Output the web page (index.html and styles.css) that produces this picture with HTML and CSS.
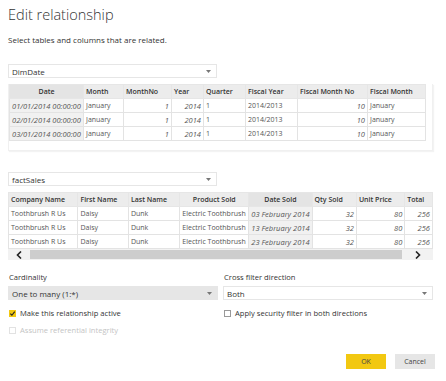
FILE: index.html
```html
<!DOCTYPE html>
<html lang="en">
<head>
  <meta charset="UTF-8" />
  <title>Edit relationship</title>
  <link rel="stylesheet" href="styles.css">
</head>
<body>
  <div class="dialog">
    <h1 class="title">Edit relationship</h1>
    <p class="subtitle">Select tables and columns that are related.</p>

    <div class="dropdown table-pick">
      <span>DimDate</span>
      <svg class="chev" width="5" height="3" viewBox="0 0 5 3"><path d="M0 0h5L2.5 3z" fill="#777"/></svg>
    </div>

    <div class="panel">
      <table class="grid">
        <colgroup>
          <col style="width:74px"><col style="width:40px"><col style="width:48px"><col style="width:32px">
          <col style="width:42px"><col style="width:52px"><col style="width:70px"><col style="width:58px">
        </colgroup>
        <thead>
          <tr>
            <th class="sel center">Date</th><th>Month</th><th>MonthNo</th><th>Year</th>
            <th>Quarter</th><th>Fiscal Year</th><th>Fiscal Month No</th><th>Fiscal Month</th>
          </tr>
        </thead>
        <tbody>
          <tr>
            <td class="sel num-l">01/01/2014 00:00:00</td><td>January</td><td class="num">1</td><td class="num">2014</td>
            <td>1</td><td>2014/2013</td><td class="num">10</td><td>January</td>
          </tr>
          <tr>
            <td class="sel num-l">02/01/2014 00:00:00</td><td>January</td><td class="num">1</td><td class="num">2014</td>
            <td>1</td><td>2014/2013</td><td class="num">10</td><td>January</td>
          </tr>
          <tr>
            <td class="sel num-l">03/01/2014 00:00:00</td><td>January</td><td class="num">1</td><td class="num">2014</td>
            <td>1</td><td>2014/2013</td><td class="num">10</td><td>January</td>
          </tr>
        </tbody>
      </table>
    </div>

    <div class="dropdown table-pick second">
      <span>factSales</span>
      <svg class="chev" width="5" height="3" viewBox="0 0 5 3"><path d="M0 0h5L2.5 3z" fill="#777"/></svg>
    </div>

    <div class="panel wide">
      <table class="grid">
        <colgroup>
          <col style="width:70px"><col style="width:51px"><col style="width:52px"><col style="width:69px">
          <col style="width:61px"><col style="width:45px"><col style="width:49px"><col style="width:28px">
        </colgroup>
        <thead>
          <tr>
            <th>Company Name</th><th>First Name</th><th>Last Name</th><th class="center">Product Sold</th>
            <th class="sel center">Date Sold</th><th>Qty Sold</th><th>Unit Price</th><th>Total</th>
          </tr>
        </thead>
        <tbody>
          <tr>
            <td>Toothbrush R Us</td><td>Daisy</td><td>Dunk</td><td>Electric Toothbrush</td>
            <td class="sel num-l">03 February 2014</td><td class="num">32</td><td class="num">80</td><td class="num">256</td>
          </tr>
          <tr>
            <td>Toothbrush R Us</td><td>Daisy</td><td>Dunk</td><td>Electric Toothbrush</td>
            <td class="sel num-l">13 February 2014</td><td class="num">32</td><td class="num">80</td><td class="num">256</td>
          </tr>
          <tr>
            <td>Toothbrush R Us</td><td>Daisy</td><td>Dunk</td><td>Electric Toothbrush</td>
            <td class="sel num-l">23 February 2014</td><td class="num">32</td><td class="num">80</td><td class="num">256</td>
          </tr>
        </tbody>
      </table>
      <div class="scrollbar">
        <div class="arrow">
          <svg width="6" height="8" viewBox="0 0 6 8"><path d="M5 0.5L1.5 4 5 7.5" fill="none" stroke="#222" stroke-width="1.6"/></svg>
        </div>
        <div class="thumb"></div>
        <div class="arrow right">
          <svg width="6" height="8" viewBox="0 0 6 8"><path d="M1 0.5L4.5 4 1 7.5" fill="none" stroke="#222" stroke-width="1.6"/></svg>
        </div>
      </div>
    </div>

    <div class="options">
      <div class="field">
        <label class="field-label">Cardinality</label>
        <div class="dropdown focused">
          <span>One to many (1:*)</span>
          <svg class="chev" width="5" height="3" viewBox="0 0 5 3"><path d="M0 0h5L2.5 3z" fill="#777"/></svg>
        </div>
        <div class="check first">
          <span class="box on">
            <svg width="8" height="8" viewBox="0 0 8 8"><path d="M1.5 4.2L3.3 6 6.6 1.8" fill="none" stroke="#222" stroke-width="1.3"/></svg>
          </span>
          Make this relationship active
        </div>
        <div class="check disabled">
          <span class="box"></span>
          Assume referential integrity
        </div>
      </div>
      <div class="field">
        <label class="field-label">Cross filter direction</label>
        <div class="dropdown">
          <span>Both</span>
          <svg class="chev" width="5" height="3" viewBox="0 0 5 3"><path d="M0 0h5L2.5 3z" fill="#777"/></svg>
        </div>
        <div class="check first">
          <span class="box"></span>
          Apply security filter in both directions
        </div>
      </div>
    </div>

    <div class="buttons">
      <button class="btn primary">OK</button>
      <button class="btn">Cancel</button>
    </div>
  </div>
</body>
</html>
```

FILE: styles.css
```css
:root {
  --text: #3a3a3a;
  --muted: #555;
  --line: #e3e3e3;
  --head: #ececec;
  --sel: #f1f1f1;
  --yellow: #f2c811;
}

body {
  margin: 0;
  background: #fff;
  font-family: "Open Sans", "Noto Sans", sans-serif;
  color: var(--text);
}

.dialog {
  padding: 0 8px;
}

.title {
  margin: 0;
  padding-top: 2px;
  height: 29px;
  font-size: 14.5px;
  font-weight: 300;
  line-height: 26px;
  color: #333;
}

.subtitle {
  margin: 0;
  height: 33px;
  font-size: 8px;
  line-height: 18px;
  color: #333;
}

.dropdown {
  display: flex;
  align-items: center;
  justify-content: space-between;
  box-sizing: border-box;
  height: 14px;
  padding: 0 5px 0 3px;
  border: 1px solid #e6e6e6;
  font-size: 8px;
  color: #333;
}

.table-pick {
  width: 209px;
}

.table-pick.second {
  margin-top: 21px;
}

.dropdown.focused {
  background: #e6e6e6;
}

.panel {
  margin-top: 6px;
  width: 425px;
  height: 67px;
  box-sizing: border-box;
  border: 1px solid #f0f0f0;
  border-top: none;
  box-shadow: 1px 1px 1px #f3f3f3;
}

.panel.wide {
  height: auto;
  border: none;
  box-shadow: none;
}

.grid {
  border-collapse: collapse;
  table-layout: fixed;
  font-size: 7px;
}

.grid th,
.grid td {
  height: 13px;
  padding: 0 2px;
  border: 1px solid var(--line);
  white-space: nowrap;
  overflow: hidden;
  text-align: left;
}

.grid th {
  background: var(--head);
  font-weight: 600;
  color: #333;
  border-color: #e6e6e6;
}

.grid td {
  color: var(--muted);
}

.grid th.center {
  text-align: center;
}

.grid th.sel {
  background: #e4e4e4;
}

.grid td.sel {
  background: var(--sel);
}

.grid td.num {
  text-align: right;
  font-style: italic;
  font-size: 7.5px;
}

.grid td.num-l {
  font-style: italic;
  font-size: 7.5px;
}

.scrollbar {
  display: flex;
  align-items: center;
  width: 425px;
  height: 11px;
  background: #f2f2f2;
}

.arrow {
  width: 22px;
  display: flex;
  justify-content: center;
}

.arrow.right {
  width: 31px;
}

.thumb {
  flex: 1;
  height: 9px;
  background: #cdcdcd;
}

.options {
  display: grid;
  grid-template-columns: 210px 210px;
  gap: 5px;
  margin-top: 11px;
}

.field-label {
  display: block;
  height: 15px;
  font-size: 7.6px;
  line-height: 12px;
  color: #333;
  padding-left: 1px;
}

.check {
  display: flex;
  align-items: center;
  gap: 4px;
  margin-top: 5px;
  height: 12px;
  font-size: 7.6px;
  color: #333;
  padding-left: 1px;
}

.check.first {
  margin-top: 7px;
}

.check.disabled {
  color: #c4c4c4;
}

.box {
  width: 7px;
  height: 7px;
  box-sizing: border-box;
  border: 1px solid #999;
  background: #fff;
  display: flex;
}

.check.disabled .box {
  border-color: #e2e2e2;
}

.box.on {
  border: none;
  background: var(--yellow);
}

.box.on svg {
  width: 7px;
  height: 7px;
}

.buttons {
  display: flex;
  justify-content: flex-end;
  gap: 9px;
  margin-top: 18px;
  padding-right: 3px;
}

.btn {
  width: 40px;
  height: 15px;
  border: none;
  padding: 0;
  background: #e6e6e6;
  font-family: inherit;
  font-size: 7px;
  color: #444;
}

.btn.primary {
  background: var(--yellow);
}
```
